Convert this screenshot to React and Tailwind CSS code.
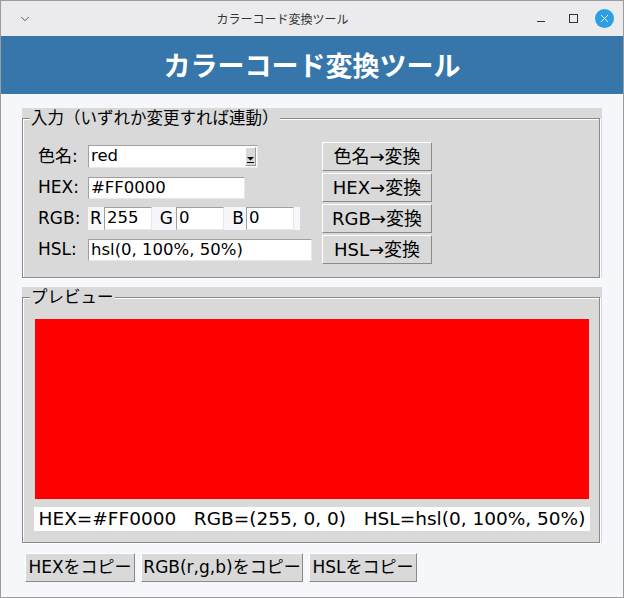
import { ChevronDown, X } from "lucide-react";

const base = "font-['DejaVu_Sans','Noto_Sans_CJK_JP',sans-serif]";

function TkButton({ children, className = "" }) {
  return (
    <button
      type="button"
      className={`flex items-center justify-center bg-[#d9d9d9] text-black border border-t-white border-l-white border-b-[#8a8a8a] border-r-[#8a8a8a] leading-none whitespace-nowrap ${className}`}
    >
      {children}
    </button>
  );
}

function Entry({ value, className = "" }) {
  return (
    <input
      readOnly
      defaultValue={value}
      className={`bg-white text-black outline-none pl-[2px] text-[16.5px] border border-t-[#a0a0a0] border-l-[#a0a0a0] border-b-[#e8e8e8] border-r-[#e8e8e8] ${base} ${className}`}
    />
  );
}

function GroupBox({ label, children }) {
  return (
    <div className="relative bg-[#d9d9d9] pt-[10px] pr-[2px]">
      <div className="border border-[#8a8a8a] shadow-[inset_1px_1px_0_#fff,1px_1px_0_#fff]">
        {children}
      </div>
      <span className="absolute left-[8px] top-[1px] bg-[#d9d9d9] px-[1px] text-[16.5px] leading-[20px] text-black">
        {label}
      </span>
    </div>
  );
}

function Combo({ value }) {
  return (
    <div className="flex w-[170px] h-[23px] bg-white border border-t-[#a0a0a0] border-l-[#a0a0a0] border-b-[#e8e8e8] border-r-[#e8e8e8]">
      <input
        readOnly
        defaultValue={value}
        className={`flex-1 min-w-0 outline-none pl-[2px] text-[16.5px] text-black bg-white ${base}`}
      />
      <div className="w-[11px] my-[1px] mr-[1px] bg-[#d9d9d9] border border-t-white border-l-white border-b-[#9a9a9a] border-r-[#9a9a9a] flex items-end justify-center pb-[2px]">
        <svg width="7" height="6" viewBox="0 0 7 6">
          <polygon points="0,0 7,0 3.5,3.5" fill="#000" />
          <rect x="0" y="5" width="7" height="1" fill="#000" />
        </svg>
      </div>
    </div>
  );
}

export default function App() {
  return (
    <div className={`w-[624px] h-[598px] flex flex-col border border-[#9c9c9c] bg-[#f6f7fb] ${base}`}>
      {/* title bar */}
      <div className="h-[35px] flex items-center bg-[#ebebed] text-[#333]">
        <div className="w-[48px] flex justify-center">
          <ChevronDown size={14} strokeWidth={1.5} className="text-[#444]" />
        </div>
        <div className="flex-1 text-center pr-[21px] text-[12px] font-['Noto_Sans_CJK_JP',sans-serif]">
          カラーコード変換ツール
        </div>
        <div className="flex items-center pr-[9px]">
          <div className="w-[8px] h-[1px] bg-[#333] mt-[6px]" />
          <div className="w-[9px] h-[9px] border border-[#333] ml-[24px]" />
          <div className="w-[19px] h-[19px] rounded-full bg-[#2a9fe2] ml-[17px] flex items-center justify-center">
            <X size={13} strokeWidth={1.6} className="text-white" />
          </div>
        </div>
      </div>

      {/* header */}
      <div className="h-[58px] bg-[#3776ab] flex items-center justify-center text-white text-[27px] font-bold font-['Noto_Sans_CJK_JP',sans-serif]">
        カラーコード変換ツール
      </div>

      {/* body */}
      <div className="flex-1 px-[21px] pt-[14px]">
        <GroupBox label="入力（いずれか変更すれば連動）">
          <div className="grid grid-cols-[50px_234px_110px] grid-rows-[29px_29px_29px_29px] gap-y-[2px] pl-[15px] pt-[23px] pb-[13px] text-[17px] text-black">
            <div className="self-center">色名:</div>
            <div className="self-center"><Combo value="red" /></div>
            <TkButton className="text-[18px]">色名→変換</TkButton>

            <div className="self-center">HEX:</div>
            <div className="self-center"><Entry value="#FF0000" className="w-[157px] h-[22px]" /></div>
            <TkButton className="text-[18px]">HEX→変換</TkButton>

            <div className="self-center">RGB:</div>
            <div className="self-center flex items-center w-[212px] h-[23px] bg-[#f6f7fb]">
              <span className="w-[16px] text-center">R</span>
              <Entry value="255" className="w-[48px] h-[23px]" />
              <span className="w-[24px] text-right pr-[3px]">G</span>
              <Entry value="0" className="w-[48px] h-[23px]" />
              <span className="w-[22px] text-right pr-[2px]">B</span>
              <Entry value="0" className="w-[48px] h-[23px]" />
            </div>
            <TkButton className="text-[18px]">RGB→変換</TkButton>

            <div className="self-center">HSL:</div>
            <div className="self-center"><Entry value="hsl(0, 100%, 50%)" className="w-[224px] h-[22px]" /></div>
            <TkButton className="text-[18px]">HSL→変換</TkButton>
          </div>
        </GroupBox>

        <div className="mt-[9px]">
          <GroupBox label="プレビュー">
            <div className="pt-[21px] pb-[11px] pl-[11px]">
              <div className="ml-[1px] w-[554px] h-[180px] bg-[#ff0000]" />
              <div className="mt-[8px] w-[556px] h-[24px] bg-white flex items-center justify-center text-[18.5px] text-black whitespace-pre">
                {"HEX=#FF0000   RGB=(255, 0, 0)   HSL=hsl(0, 100%, 50%)"}
              </div>
            </div>
          </GroupBox>
        </div>

        <div className="flex gap-[6px] mt-[10px] ml-[3px] text-[17px]">
          <TkButton className="h-[29px] w-[110px]">HEXをコピー</TkButton>
          <TkButton className="h-[29px] w-[162px]">RGB(r,g,b)をコピー</TkButton>
          <TkButton className="h-[29px] w-[108px]">HSLをコピー</TkButton>
        </div>
      </div>
    </div>
  );
}
